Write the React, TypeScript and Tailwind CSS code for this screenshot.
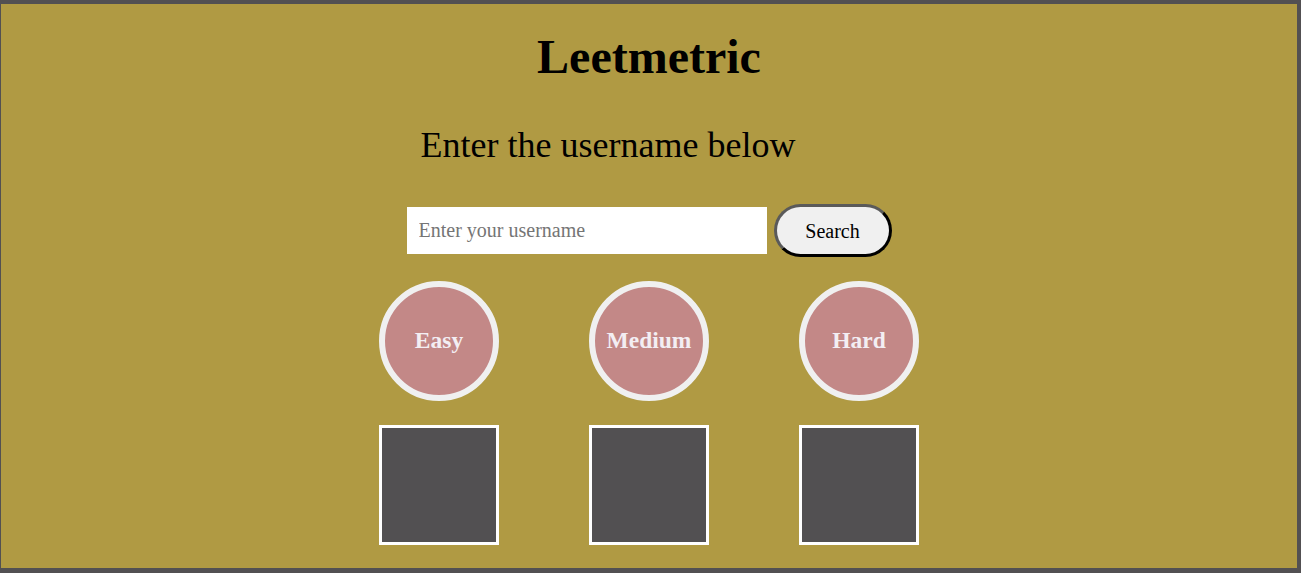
import React from 'react';

const levels = ['Easy', 'Medium', 'Hard'];

const App: React.FC = () => {
  return (
    <div className="min-h-screen bg-[#525052] pt-[4px] pl-[1px] pr-[4px] pb-[5px] font-['Liberation_Serif',serif]">
      <div className="h-[564px] bg-[#b09a43] flex flex-col items-center">
        <h1 className="mt-[29px] text-[48px] leading-none font-bold text-black">Leetmetric</h1>

        <div className="mt-[46px] pr-[82px]">
          <p className="text-[36px] leading-none text-black">Enter the username below</p>
        </div>

        <div className="mt-[41px] flex items-center gap-[7px]">
          <input
            type="text"
            placeholder="Enter your username"
            className="w-[360px] h-[47px] bg-white px-3 text-[20px] text-black placeholder:text-[#757575] outline-none"
          />
          <button className="w-[118px] h-[53px] rounded-full bg-[#f0f0f0] border-[3px] border-t-[#5a5a5a] border-l-[#5a5a5a] border-b-black border-r-black text-[20px] text-black">
            Search
          </button>
        </div>

        <div className="mt-[24px] flex gap-[90px]">
          {levels.map((l) => (
            <div
              key={l}
              className="w-[120px] h-[120px] rounded-full border-[6px] border-[#f0f0f0] bg-[#c38887] flex items-center justify-center"
            >
              <span className="text-[23.5px] font-bold text-[#f3eef3]">{l}</span>
            </div>
          ))}
        </div>

        <div className="mt-[24px] flex gap-[90px]">
          {levels.map((l) => (
            <div key={l} className="w-[120px] h-[120px] border-[3px] border-white bg-[#525052]" />
          ))}
        </div>
      </div>
    </div>
  );
};

export default App;
